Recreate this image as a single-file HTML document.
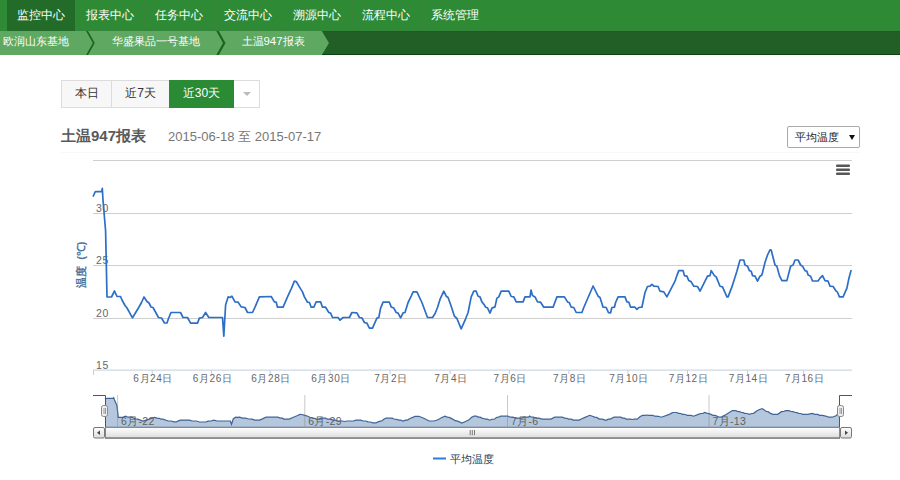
<!DOCTYPE html>
<html><head><meta charset="utf-8">
<style>
*{margin:0;padding:0;box-sizing:border-box}
html,body{width:900px;height:480px;overflow:hidden;background:#fff;font-family:"Liberation Sans",sans-serif}
#nav{position:absolute;left:0;top:0;width:900px;height:31px;background:#2e8a35;border-bottom:1px solid #33853a}
#nav .it{position:absolute;top:0;height:30px;line-height:29px;color:#fff;font-size:11.6px;text-align:center}
#nav .sep{position:absolute;top:0;width:1px;height:30px;background:#3a853a}
#nav .act{background:#236b29}
#bc{position:absolute;left:0;top:31px;width:900px;height:24px;background:#215f26;border-top:1px solid #1b5c20;border-bottom:1px solid #0f4212}
.bci{position:absolute;top:31px;height:24px;line-height:20px;color:#fff;font-size:11.4px;background:#5ea862;white-space:nowrap}
#btns{position:absolute;left:61px;top:80px;height:28px;border:1px solid #dcdcdc;background:#f7f7f7}
#btns div{position:absolute;top:0;height:26px;line-height:24.5px;font-size:12px;color:#333;text-align:center}
#title{position:absolute;left:61px;top:127px;font-size:15px;font-weight:bold;color:#595959;line-height:18px}
#date{position:absolute;left:168px;top:127.5px;font-size:13px;color:#777;line-height:18px}
#sel{position:absolute;left:787px;top:126px;width:73px;height:22px;border:1px solid #a9a9a9;border-radius:2px;background:#fff;font-size:11px;color:#222}
svg{position:absolute;left:0;top:0}
</style></head><body>
<div id="nav">
<div class="act" style="position:absolute;left:7px;top:0;width:68px;height:31px"></div>
<div class="sep" style="left:144px"></div>
<div class="sep" style="left:213.5px"></div>
<div class="sep" style="left:283.3px"></div>
<div class="sep" style="left:351.5px"></div>
<div class="sep" style="left:421.5px"></div>
<div class="sep" style="left:488.5px"></div>
<div class="it" style="left:0.8500000000000014px;width:80px">监控中心</div>
<div class="it" style="left:70.3px;width:80px">报表中心</div>
<div class="it" style="left:139.15px;width:80px">任务中心</div>
<div class="it" style="left:207.9px;width:80px">交流中心</div>
<div class="it" style="left:276.65px;width:80px">溯源中心</div>
<div class="it" style="left:345.5px;width:80px">流程中心</div>
<div class="it" style="left:415.3px;width:80px">系统管理</div>
</div>
<div id="bc"></div>
<div class="bci" style="left:0;width:322px"></div>
<div class="bci" style="left:3px;width:80px">欧润山东基地</div>
<div class="bci" style="left:111.5px;width:100px">华盛果品一号基地</div>
<div class="bci" style="left:241.5px;width:75px">土温947报表</div>
<svg width="900" height="60" style="top:0">
<polygon points="321.75,31 329,43 321.75,55" fill="#5ea862"/>
<polygon points="88,31 94.75,43 88,55 86.1,55 92.8,43 86.1,31" fill="#18661c"/>
<polygon points="218.75,31 225.5,43 218.75,55 216.3,55 223,43 216.3,31" fill="#18661c"/>
</svg>
<div id="btns" style="width:199px">
<div style="left:0;width:50px;border-right:1px solid #dcdcdc">本日</div>
<div style="left:50px;width:57px">近7天</div>
<div style="left:107px;width:65px;top:-1px;height:28px;line-height:27px;background:#2b8a34;color:#fff">近30天</div>
<div style="left:172px;width:25px;background:#fff"><span style="position:absolute;left:9px;top:10.5px;border-left:4px solid transparent;border-right:4px solid transparent;border-top:4.5px solid #bbb"></span></div>
</div>
<div id="title">土温947报表</div>
<div id="date">2015-06-18 至 2015-07-17</div>
<div id="sel"><span style="position:absolute;left:6.5px;top:2px;line-height:16px">平均温度</span><span style="position:absolute;left:61px;top:7.5px;border-left:3px solid transparent;border-right:3px solid transparent;border-top:5px solid #111"></span></div>

<div style="position:absolute;left:61px;top:152px;width:799px;height:4px;border-top:1px solid #f8f8f8"></div>
<svg width="900" height="480" style="top:0" font-family="Liberation Sans, sans-serif">
<rect x="93" y="160" width="759" height="1" fill="#cfcfcf"/>
<rect x="93" y="213" width="759" height="1" fill="#cfcfcf"/>
<rect x="93" y="265" width="759" height="1" fill="#cfcfcf"/>
<rect x="93" y="318" width="759" height="1" fill="#cfcfcf"/>
<rect x="93" y="369.6" width="759" height="1" fill="#c0d0e0"/>
<rect x="93" y="370" width="1" height="5" fill="#c0d0e0"/>
<rect x="151.7" y="370" width="1" height="4" fill="#c0d0e0"/>
<text x="153.2" y="382.3" font-size="10" fill="#666" text-anchor="middle" letter-spacing="0.6">6月24日</text>
<rect x="211.1" y="370" width="1" height="4" fill="#c0d0e0"/>
<text x="212.6" y="382.3" font-size="10" fill="#666" text-anchor="middle" letter-spacing="0.6">6月26日</text>
<rect x="269.6" y="370" width="1" height="4" fill="#c0d0e0"/>
<text x="271.1" y="382.3" font-size="10" fill="#666" text-anchor="middle" letter-spacing="0.6">6月28日</text>
<rect x="329.6" y="370" width="1" height="4" fill="#c0d0e0"/>
<text x="331.1" y="382.3" font-size="10" fill="#666" text-anchor="middle" letter-spacing="0.6">6月30日</text>
<rect x="389.6" y="370" width="1" height="4" fill="#c0d0e0"/>
<text x="391.1" y="382.3" font-size="10" fill="#666" text-anchor="middle" letter-spacing="0.6">7月2日</text>
<rect x="449.6" y="370" width="1" height="4" fill="#c0d0e0"/>
<text x="451.1" y="382.3" font-size="10" fill="#666" text-anchor="middle" letter-spacing="0.6">7月4日</text>
<rect x="508.8" y="370" width="1" height="4" fill="#c0d0e0"/>
<text x="510.3" y="382.3" font-size="10" fill="#666" text-anchor="middle" letter-spacing="0.6">7月6日</text>
<rect x="568.3" y="370" width="1" height="4" fill="#c0d0e0"/>
<text x="569.8" y="382.3" font-size="10" fill="#666" text-anchor="middle" letter-spacing="0.6">7月8日</text>
<rect x="627.5" y="370" width="1" height="4" fill="#c0d0e0"/>
<text x="629" y="382.3" font-size="10" fill="#666" text-anchor="middle" letter-spacing="0.6">7月10日</text>
<rect x="687.0" y="370" width="1" height="4" fill="#c0d0e0"/>
<text x="688.5" y="382.3" font-size="10" fill="#666" text-anchor="middle" letter-spacing="0.6">7月12日</text>
<rect x="747.0" y="370" width="1" height="4" fill="#c0d0e0"/>
<text x="748.5" y="382.3" font-size="10" fill="#666" text-anchor="middle" letter-spacing="0.6">7月14日</text>
<rect x="803.0" y="370" width="1" height="4" fill="#c0d0e0"/>
<text x="804.5" y="382.3" font-size="10" fill="#666" text-anchor="middle" letter-spacing="0.6">7月16日</text>
<text x="96" y="211.6" font-size="10.5" fill="#666" letter-spacing="0.6">30</text>
<text x="96" y="264.0" font-size="10.5" fill="#666" letter-spacing="0.6">25</text>
<text x="96" y="317.0" font-size="10.5" fill="#666" letter-spacing="0.6">20</text>
<text x="96" y="369.0" font-size="10.5" fill="#666" letter-spacing="0.6">15</text>
<text transform="translate(85.2,287.5) rotate(-90)" font-size="11" font-weight="bold" fill="#4d759e">温度</text><text transform="translate(85.2,259.8) rotate(-90)" font-size="11" font-weight="bold" fill="#4d759e">(℃)</text>
<path d="M93.3 196.0 L95.3 191.7 L101.7 191.7 L102.3 188.3 L103.0 200.0 L105.6 231.0 L107.0 297.0 L111.5 297.0 L114.5 291.0 L117.0 296.5 L120.5 296.5 L122.0 300.0 L125.0 305.5 L127.0 308.0 L132.5 317.8 L139.0 307.0 L141.5 302.5 L144.0 297.0 L147.0 301.5 L149.0 303.0 L151.0 307.0 L153.0 307.5 L158.5 317.5 L161.5 318.0 L164.5 323.0 L167.0 323.0 L168.5 318.5 L171.0 312.5 L180.5 312.5 L183.0 317.5 L187.5 317.5 L190.6 323.1 L197.5 323.1 L199.4 318.1 L202.5 317.5 L205.6 312.5 L208.8 317.5 L222.5 317.5 L223.8 336.2 L225.6 305.0 L228.1 296.9 L230.0 297.5 L231.9 296.2 L235.0 301.9 L238.1 302.2 L241.2 306.9 L245.0 307.5 L247.5 312.5 L252.5 312.5 L255.0 307.2 L259.4 296.9 L271.2 296.5 L274.4 301.9 L276.2 302.2 L277.5 307.2 L283.1 307.2 L287.5 296.9 L291.2 288.8 L294.4 281.2 L296.2 281.5 L299.4 286.9 L302.5 291.9 L304.4 296.9 L307.5 302.2 L309.4 302.5 L311.2 307.2 L313.8 307.2 L316.2 301.9 L320.6 301.9 L322.5 307.2 L325.6 307.2 L328.8 312.5 L330.6 313.1 L332.5 317.5 L338.1 317.5 L340.0 320.2 L343.1 317.5 L349.4 317.5 L351.9 312.5 L356.9 312.8 L359.4 317.5 L361.9 317.8 L364.4 322.5 L366.9 323.1 L369.4 328.1 L372.5 328.1 L376.9 318.1 L378.8 317.5 L380.6 308.1 L383.1 302.2 L389.4 302.2 L391.2 306.9 L393.8 308.1 L396.2 312.5 L398.1 313.1 L400.6 317.8 L403.1 312.8 L405.0 312.5 L408.1 302.5 L411.2 296.2 L413.1 291.9 L416.9 291.9 L421.9 302.5 L427.5 317.5 L432.5 317.5 L435.0 313.8 L437.5 307.5 L440.0 299.4 L443.8 291.2 L446.2 296.2 L448.1 297.5 L451.2 306.2 L454.4 316.2 L456.9 318.5 L461.2 328.8 L465.6 318.8 L468.1 312.5 L471.2 296.9 L473.8 291.2 L476.2 291.2 L478.1 296.2 L480.0 296.9 L481.9 301.9 L484.4 305.0 L485.6 307.2 L487.5 307.8 L490.0 313.1 L491.9 308.1 L495.0 306.9 L496.9 298.1 L498.8 296.9 L501.2 291.2 L508.8 291.2 L511.2 296.5 L513.8 296.9 L516.2 301.9 L523.1 301.9 L525.0 296.9 L530.0 296.9 L531.0 290.0 L532.5 295.6 L535.0 296.9 L537.5 301.9 L540.6 302.2 L543.8 307.2 L553.1 307.2 L556.9 296.9 L564.4 296.9 L567.5 301.9 L569.4 302.8 L571.2 307.2 L573.8 307.5 L576.2 312.5 L581.9 312.5 L583.8 307.5 L588.1 297.5 L593.1 286.0 L598.1 296.2 L600.0 297.5 L603.1 307.2 L606.2 307.5 L608.5 312.6 L610.6 312.8 L611.9 307.5 L614.4 307.2 L615.6 302.5 L618.1 296.9 L625.0 296.9 L626.9 301.9 L628.8 302.2 L630.6 307.2 L635.0 307.2 L636.9 309.4 L638.8 307.5 L641.9 307.2 L645.0 292.5 L647.5 286.5 L650.0 286.2 L651.9 284.4 L653.8 286.2 L658.1 286.5 L660.0 291.2 L663.8 291.9 L666.9 296.9 L675.0 281.2 L676.9 275.6 L678.8 270.6 L683.1 270.6 L684.4 275.6 L686.9 276.2 L688.8 280.6 L690.6 281.2 L691.2 281.9 L693.8 286.2 L697.5 286.5 L700.0 291.2 L705.0 281.2 L707.5 276.2 L710.0 275.6 L711.2 270.6 L714.4 275.6 L716.2 276.9 L720.0 286.2 L722.5 286.9 L724.4 291.2 L726.9 296.9 L728.1 296.9 L731.9 286.9 L736.9 271.2 L740.0 260.0 L743.8 260.0 L745.0 265.0 L747.5 266.2 L749.4 270.6 L751.2 271.2 L752.5 275.6 L755.0 276.2 L757.5 281.2 L760.0 276.2 L761.9 275.0 L765.0 262.5 L767.5 255.0 L770.0 249.8 L771.2 250.0 L775.0 265.0 L776.9 266.2 L779.4 275.6 L781.9 280.6 L786.9 280.6 L790.6 266.2 L793.1 265.0 L795.0 260.0 L798.1 260.0 L800.6 265.0 L802.5 266.2 L805.0 270.6 L806.9 271.2 L808.1 275.0 L810.6 276.2 L812.5 281.0 L818.1 281.0 L820.0 278.1 L822.5 275.6 L825.0 280.6 L828.1 281.2 L830.0 286.2 L833.1 286.5 L836.2 291.2 L837.5 292.2 L839.4 296.9 L843.1 296.9 L846.9 288.1 L848.8 278.8 L851.0 270.6" fill="none" stroke="#2d6fc6" stroke-width="1.7" stroke-linejoin="round" stroke-linecap="round"/>
<rect x="836" y="164.5" width="14" height="2.4" rx="1" fill="#575757"/>
<rect x="836" y="168.5" width="14" height="2.4" rx="1" fill="#575757"/>
<rect x="836" y="172.5" width="14" height="2.4" rx="1" fill="#575757"/>
<path d="M105.0 399.1 L106.9 398.3 L113.1 398.3 L113.7 397.7 L114.4 399.8 L116.9 405.4 L118.3 417.3 L122.7 417.3 L125.6 416.2 L128.0 417.2 L131.4 417.2 L132.8 417.8 L135.8 418.8 L137.7 419.2 L143.0 421.0 L149.3 419.1 L151.8 418.3 L154.2 417.3 L157.1 418.1 L159.0 418.3 L161.0 419.1 L162.9 419.2 L168.2 421.0 L171.2 421.0 L174.1 421.9 L176.5 421.9 L177.9 421.1 L180.4 420.1 L189.6 420.1 L192.0 421.0 L196.4 421.0 L199.4 422.0 L206.1 422.0 L207.9 421.1 L210.9 421.0 L213.9 420.1 L217.0 421.0 L230.3 421.0 L231.5 424.3 L233.3 418.7 L235.8 417.2 L237.6 417.4 L239.4 417.1 L242.5 418.1 L245.5 418.2 L248.5 419.0 L252.2 419.2 L254.6 420.1 L259.4 420.1 L261.9 419.1 L266.1 417.2 L277.6 417.2 L280.7 418.1 L282.5 418.2 L283.7 419.1 L289.1 419.1 L293.4 417.2 L297.0 415.8 L300.1 414.4 L301.9 414.5 L304.9 415.4 L307.9 416.3 L309.8 417.2 L312.8 418.2 L314.6 418.3 L316.4 419.1 L318.8 419.1 L321.3 418.1 L325.5 418.1 L327.3 419.1 L330.3 419.1 L333.4 420.1 L335.2 420.2 L337.0 421.0 L342.5 421.0 L344.3 421.5 L347.3 421.0 L353.4 421.0 L355.9 420.1 L360.7 420.1 L363.1 421.0 L365.6 421.0 L368.0 421.9 L370.4 422.0 L372.8 422.9 L375.8 422.9 L380.1 421.1 L381.9 421.0 L383.7 419.3 L386.1 418.2 L392.2 418.2 L394.0 419.0 L396.4 419.3 L398.9 420.1 L400.7 420.2 L403.1 421.0 L405.5 420.1 L407.4 420.1 L410.4 418.3 L413.4 417.1 L415.2 416.3 L418.9 416.3 L423.8 418.3 L429.2 421.0 L434.0 421.0 L436.5 420.3 L438.9 419.2 L441.3 417.7 L445.0 416.2 L447.4 417.1 L449.2 417.4 L452.2 418.9 L455.3 420.7 L457.7 421.1 L461.9 423.0 L466.1 421.2 L468.6 420.1 L471.6 417.2 L474.1 416.2 L476.5 416.2 L478.3 417.1 L480.1 417.2 L482.0 418.1 L484.4 418.7 L485.5 419.1 L487.4 419.2 L489.8 420.2 L491.7 419.3 L494.7 419.0 L496.5 417.5 L498.3 417.2 L500.7 416.2 L508.0 416.2 L510.4 417.2 L512.9 417.2 L515.3 418.1 L521.9 418.1 L523.8 417.2 L528.6 417.2 L529.6 416.0 L531.0 417.0 L533.5 417.2 L535.9 418.1 L538.9 418.2 L542.0 419.1 L551.0 419.1 L554.7 417.2 L562.0 417.2 L565.0 418.1 L566.8 418.3 L568.6 419.1 L571.1 419.2 L573.5 420.1 L579.0 420.1 L580.8 419.2 L585.0 417.4 L589.8 415.3 L594.7 417.1 L596.5 417.4 L599.5 419.1 L602.6 419.2 L604.8 420.1 L606.8 420.1 L608.1 419.2 L610.5 419.1 L611.7 418.3 L614.1 417.2 L620.8 417.2 L622.6 418.1 L624.4 418.2 L626.2 419.1 L630.5 419.1 L632.3 419.5 L634.1 419.2 L637.2 419.1 L640.2 416.5 L642.6 415.4 L645.0 415.3 L646.9 415.0 L648.7 415.3 L652.9 415.4 L654.7 416.2 L658.4 416.3 L661.4 417.2 L669.3 414.4 L671.1 413.4 L672.9 412.5 L677.1 412.5 L678.4 413.4 L680.8 413.5 L682.6 414.3 L684.4 414.4 L685.0 414.5 L687.5 415.3 L691.1 415.4 L693.5 416.2 L698.4 414.4 L700.8 413.5 L703.2 413.4 L704.4 412.5 L707.5 413.4 L709.3 413.6 L712.9 415.3 L715.3 415.4 L717.2 416.2 L719.6 417.2 L720.8 417.2 L724.5 415.4 L729.3 412.6 L732.3 410.6 L736.0 410.6 L737.2 411.5 L739.6 411.7 L741.4 412.5 L743.2 412.6 L744.5 413.4 L746.9 413.5 L749.3 414.4 L751.7 413.5 L753.6 413.3 L756.6 411.1 L759.0 409.7 L761.4 408.8 L762.6 408.8 L766.3 411.5 L768.1 411.7 L770.5 413.4 L773.0 414.3 L777.8 414.3 L781.4 411.7 L783.8 411.5 L785.7 410.6 L788.7 410.6 L791.1 411.5 L793.0 411.7 L795.4 412.5 L797.2 412.6 L798.4 413.3 L800.8 413.5 L802.7 414.4 L808.1 414.4 L809.9 413.9 L812.4 413.4 L814.8 414.3 L817.8 414.4 L819.6 415.3 L822.6 415.4 L825.7 416.2 L826.9 416.4 L828.7 417.2 L832.3 417.2 L836.0 415.7 L837.8 414.0 L840.0 412.5 L840.0 427 L105.0 427 Z" fill="#b5c7dc"/>
<path d="M105.0 399.1 L106.9 398.3 L113.1 398.3 L113.7 397.7 L114.4 399.8 L116.9 405.4 L118.3 417.3 L122.7 417.3 L125.6 416.2 L128.0 417.2 L131.4 417.2 L132.8 417.8 L135.8 418.8 L137.7 419.2 L143.0 421.0 L149.3 419.1 L151.8 418.3 L154.2 417.3 L157.1 418.1 L159.0 418.3 L161.0 419.1 L162.9 419.2 L168.2 421.0 L171.2 421.0 L174.1 421.9 L176.5 421.9 L177.9 421.1 L180.4 420.1 L189.6 420.1 L192.0 421.0 L196.4 421.0 L199.4 422.0 L206.1 422.0 L207.9 421.1 L210.9 421.0 L213.9 420.1 L217.0 421.0 L230.3 421.0 L231.5 424.3 L233.3 418.7 L235.8 417.2 L237.6 417.4 L239.4 417.1 L242.5 418.1 L245.5 418.2 L248.5 419.0 L252.2 419.2 L254.6 420.1 L259.4 420.1 L261.9 419.1 L266.1 417.2 L277.6 417.2 L280.7 418.1 L282.5 418.2 L283.7 419.1 L289.1 419.1 L293.4 417.2 L297.0 415.8 L300.1 414.4 L301.9 414.5 L304.9 415.4 L307.9 416.3 L309.8 417.2 L312.8 418.2 L314.6 418.3 L316.4 419.1 L318.8 419.1 L321.3 418.1 L325.5 418.1 L327.3 419.1 L330.3 419.1 L333.4 420.1 L335.2 420.2 L337.0 421.0 L342.5 421.0 L344.3 421.5 L347.3 421.0 L353.4 421.0 L355.9 420.1 L360.7 420.1 L363.1 421.0 L365.6 421.0 L368.0 421.9 L370.4 422.0 L372.8 422.9 L375.8 422.9 L380.1 421.1 L381.9 421.0 L383.7 419.3 L386.1 418.2 L392.2 418.2 L394.0 419.0 L396.4 419.3 L398.9 420.1 L400.7 420.2 L403.1 421.0 L405.5 420.1 L407.4 420.1 L410.4 418.3 L413.4 417.1 L415.2 416.3 L418.9 416.3 L423.8 418.3 L429.2 421.0 L434.0 421.0 L436.5 420.3 L438.9 419.2 L441.3 417.7 L445.0 416.2 L447.4 417.1 L449.2 417.4 L452.2 418.9 L455.3 420.7 L457.7 421.1 L461.9 423.0 L466.1 421.2 L468.6 420.1 L471.6 417.2 L474.1 416.2 L476.5 416.2 L478.3 417.1 L480.1 417.2 L482.0 418.1 L484.4 418.7 L485.5 419.1 L487.4 419.2 L489.8 420.2 L491.7 419.3 L494.7 419.0 L496.5 417.5 L498.3 417.2 L500.7 416.2 L508.0 416.2 L510.4 417.2 L512.9 417.2 L515.3 418.1 L521.9 418.1 L523.8 417.2 L528.6 417.2 L529.6 416.0 L531.0 417.0 L533.5 417.2 L535.9 418.1 L538.9 418.2 L542.0 419.1 L551.0 419.1 L554.7 417.2 L562.0 417.2 L565.0 418.1 L566.8 418.3 L568.6 419.1 L571.1 419.2 L573.5 420.1 L579.0 420.1 L580.8 419.2 L585.0 417.4 L589.8 415.3 L594.7 417.1 L596.5 417.4 L599.5 419.1 L602.6 419.2 L604.8 420.1 L606.8 420.1 L608.1 419.2 L610.5 419.1 L611.7 418.3 L614.1 417.2 L620.8 417.2 L622.6 418.1 L624.4 418.2 L626.2 419.1 L630.5 419.1 L632.3 419.5 L634.1 419.2 L637.2 419.1 L640.2 416.5 L642.6 415.4 L645.0 415.3 L646.9 415.0 L648.7 415.3 L652.9 415.4 L654.7 416.2 L658.4 416.3 L661.4 417.2 L669.3 414.4 L671.1 413.4 L672.9 412.5 L677.1 412.5 L678.4 413.4 L680.8 413.5 L682.6 414.3 L684.4 414.4 L685.0 414.5 L687.5 415.3 L691.1 415.4 L693.5 416.2 L698.4 414.4 L700.8 413.5 L703.2 413.4 L704.4 412.5 L707.5 413.4 L709.3 413.6 L712.9 415.3 L715.3 415.4 L717.2 416.2 L719.6 417.2 L720.8 417.2 L724.5 415.4 L729.3 412.6 L732.3 410.6 L736.0 410.6 L737.2 411.5 L739.6 411.7 L741.4 412.5 L743.2 412.6 L744.5 413.4 L746.9 413.5 L749.3 414.4 L751.7 413.5 L753.6 413.3 L756.6 411.1 L759.0 409.7 L761.4 408.8 L762.6 408.8 L766.3 411.5 L768.1 411.7 L770.5 413.4 L773.0 414.3 L777.8 414.3 L781.4 411.7 L783.8 411.5 L785.7 410.6 L788.7 410.6 L791.1 411.5 L793.0 411.7 L795.4 412.5 L797.2 412.6 L798.4 413.3 L800.8 413.5 L802.7 414.4 L808.1 414.4 L809.9 413.9 L812.4 413.4 L814.8 414.3 L817.8 414.4 L819.6 415.3 L822.6 415.4 L825.7 416.2 L826.9 416.4 L828.7 417.2 L832.3 417.2 L836.0 415.7 L837.8 414.0 L840.0 412.5" fill="none" stroke="#3f6496" stroke-width="1.2"/>
<rect x="117.1" y="395" width="1" height="32" fill="#777" fill-opacity="0.4"/>
<text x="121.1" y="424.5" font-size="10.5" fill="#606060" letter-spacing="0.3">6月-22</text>
<rect x="304.3" y="395" width="1" height="32" fill="#777" fill-opacity="0.4"/>
<text x="308.3" y="424.5" font-size="10.5" fill="#606060" letter-spacing="0.3">6月-29</text>
<rect x="507.0" y="395" width="1" height="32" fill="#777" fill-opacity="0.4"/>
<text x="511.0" y="424.5" font-size="10.5" fill="#606060" letter-spacing="0.3">7月-6</text>
<rect x="708.5" y="395" width="1" height="32" fill="#777" fill-opacity="0.4"/>
<text x="712.5" y="424.5" font-size="10.5" fill="#606060" letter-spacing="0.3">7月-13</text>
<rect x="105" y="426.5" width="735" height="1" fill="#8a9ab0"/>
<path d="M93 395.5 H105.5 V427 M839.5 427 V395.5 H852" fill="none" stroke="#555" stroke-width="1"/>
<defs><linearGradient id="sg" x1="0" y1="0" x2="0" y2="1"><stop offset="0" stop-color="#fff"/><stop offset="1" stop-color="#dcdcdc"/></linearGradient></defs>
<rect x="105.5" y="427.5" width="734" height="10.5" fill="url(#sg)" stroke="#8a8a8a" stroke-width="1"/><rect x="105" y="437.6" width="735" height="1" fill="#6a6a6a"/>
<rect x="93.5" y="427.5" width="11" height="10.5" rx="1.5" fill="url(#sg)" stroke="#777" stroke-width="1"/>
<rect x="840.5" y="427.5" width="11" height="10.5" rx="1.5" fill="url(#sg)" stroke="#777" stroke-width="1"/>
<path d="M97 432.7 L100 430.5 V435 Z" fill="#444"/>
<path d="M848 432.7 L845 430.5 V435 Z" fill="#444"/>
<path d="M470.2 430 V435.2 M472.3 430 V435.2 M474.5 430 V435.2" stroke="#777" stroke-width="1"/>
<rect x="101.5" y="405.5" width="6" height="11" rx="2" fill="#eee" stroke="#888" stroke-width="1"/>
<path d="M104.0 408 V414 M105.5 408 V414" stroke="#999" stroke-width="1"/>
<rect x="837.5" y="405.5" width="6" height="11" rx="2" fill="#eee" stroke="#888" stroke-width="1"/>
<path d="M840.0 408 V414 M841.5 408 V414" stroke="#999" stroke-width="1"/>
<rect x="433" y="457.5" width="13" height="2" fill="#2f7ed8"/>
<text x="450.3" y="463" font-size="10.8" fill="#20405f">平均温度</text>
</svg>
</body></html>
